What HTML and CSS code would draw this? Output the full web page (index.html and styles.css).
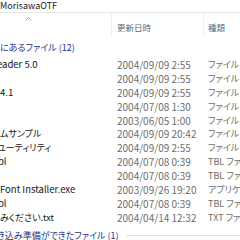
FILE: index.html
```html
<!DOCTYPE html>
<html lang="ja">
<head>
<meta charset="utf-8">
<link rel="stylesheet" href="styles.css">
</head>
<body>
<div class="pane">
  <div class="path">MorisawaOTF</div>
  <div class="colhead">
    <div class="hcell hname"><svg class="sort" width="7" height="4" viewBox="0 0 7 4"><polyline points="0.5,3.5 3.5,0.5 6.5,3.5" fill="none" stroke="#a8a8a8" stroke-width="1"/></svg></div>
    <div class="hcell hdate">更新日時</div>
    <div class="hcell htype">種類</div>
  </div>
  <div class="group"><span class="gtitle">にあるファイル (12)</span></div>
  <div class="rows">
    <div class="row"><span class="name"><span class="cut3">eader 5.0</span></span><span class="date">2004/09/09 2:55</span><span class="type">ファイル フォルダー</span></div>
    <div class="row"><span class="name"></span><span class="date">2004/09/09 2:55</span><span class="type">ファイル フォルダー</span></div>
    <div class="row"><span class="name">4.1</span><span class="date">2004/09/09 2:55</span><span class="type">ファイル フォルダー</span></div>
    <div class="row"><span class="name"></span><span class="date">2004/07/08 1:30</span><span class="type">ファイル フォルダー</span></div>
    <div class="row"><span class="name"></span><span class="date">2003/06/05 1:00</span><span class="type">ファイル フォルダー</span></div>
    <div class="row"><span class="name jp">ムサンプル</span><span class="date">2004/09/09 20:42</span><span class="type">ファイル フォルダー</span></div>
    <div class="row"><span class="name jp"><span class="cut3">ユーティリティ</span></span><span class="date">2004/09/09 2:55</span><span class="type">ファイル フォルダー</span></div>
    <div class="row"><span class="name"><span class="cut">bl</span></span><span class="date">2004/07/08 0:39</span><span class="type">TBL ファイル</span></div>
    <div class="row"><span class="name"></span><span class="date">2004/07/08 0:39</span><span class="type">TBL ファイル</span></div>
    <div class="row"><span class="name">Font Installer.exe</span><span class="date">2003/09/26 19:20</span><span class="type">アプリケーション</span></div>
    <div class="row"><span class="name"><span class="cut">bl</span></span><span class="date">2004/07/08 0:39</span><span class="type">TBL ファイル</span></div>
    <div class="row"><span class="name jp">みください.txt</span><span class="date">2004/04/14 12:32</span><span class="type">TXT ファイル</span></div>
  </div>
  <div class="group"><span class="gtitle"><span class="cut3">き込み準備ができたファイル (1)</span></span><span class="gline"></span></div>
</div>
</body>
</html>
```
FILE: styles.css
```css
html, body {
  margin: 0;
  padding: 0;
  background: #ffffff;
}
body {
  width: 240px;
  height: 240px;
  overflow: hidden;
  font-family: "Noto Sans CJK JP", "Noto Sans", sans-serif;
  font-feature-settings: "palt";
  color: #1a1a1a;
}
.pane {
  display: flex;
  flex-direction: column;
}
.path {
  height: 12px;
  font-size: 9px;
  line-height: 11px;
  border-bottom: 1px solid #e8e8e8;
  white-space: nowrap;
}
.colhead {
  display: grid;
  grid-template-columns: 112px 92px 1fr;
  height: 23px;
}
.hcell {
  font-size: 8.5px;
  line-height: 12px;
  color: #5a6678;
  white-space: nowrap;
  overflow: hidden;
  display: flex;
  align-items: flex-end;
  padding-bottom: 3px;
  box-sizing: border-box;
}
.hname {
  border-right: 1px solid #efefef;
  align-items: flex-start;
  padding-top: 4px;
}
.sort {
  margin-left: 25px;
}
.hdate {
  border-right: 1px solid #efefef;
  padding-left: 5px;
}
.htype {
  padding-left: 4px;
}
.group {
  height: 22px;
  display: flex;
  align-items: center;
  gap: 7px;
}
.gtitle {
  font-size: 9px;
  color: #1e3287;
  white-space: nowrap;
  overflow: hidden;
}
.gline {
  flex: 1;
  border-top: 1px solid #e2e2e2;
}
.rows {
  display: flex;
  flex-direction: column;
}
.row {
  display: grid;
  grid-template-columns: 112px 92px 1fr;
  height: 13.9px;
  line-height: 13.9px;
  font-size: 10px;
  white-space: nowrap;
}
.row > span {
  overflow: hidden;
}
.name {
  color: #141414;
  font-size: 9.5px;
}
.name.jp {
  font-size: 9px;
}
.cut {
  display: inline-block;
  margin-left: -2px;
}
.cut3 {
  display: inline-block;
  margin-left: -3px;
}
.date {
  color: #6d6d6d;
  padding-left: 5px;
}
.type {
  color: #6d6d6d;
  padding-left: 4px;
  font-size: 9px;
}
```
